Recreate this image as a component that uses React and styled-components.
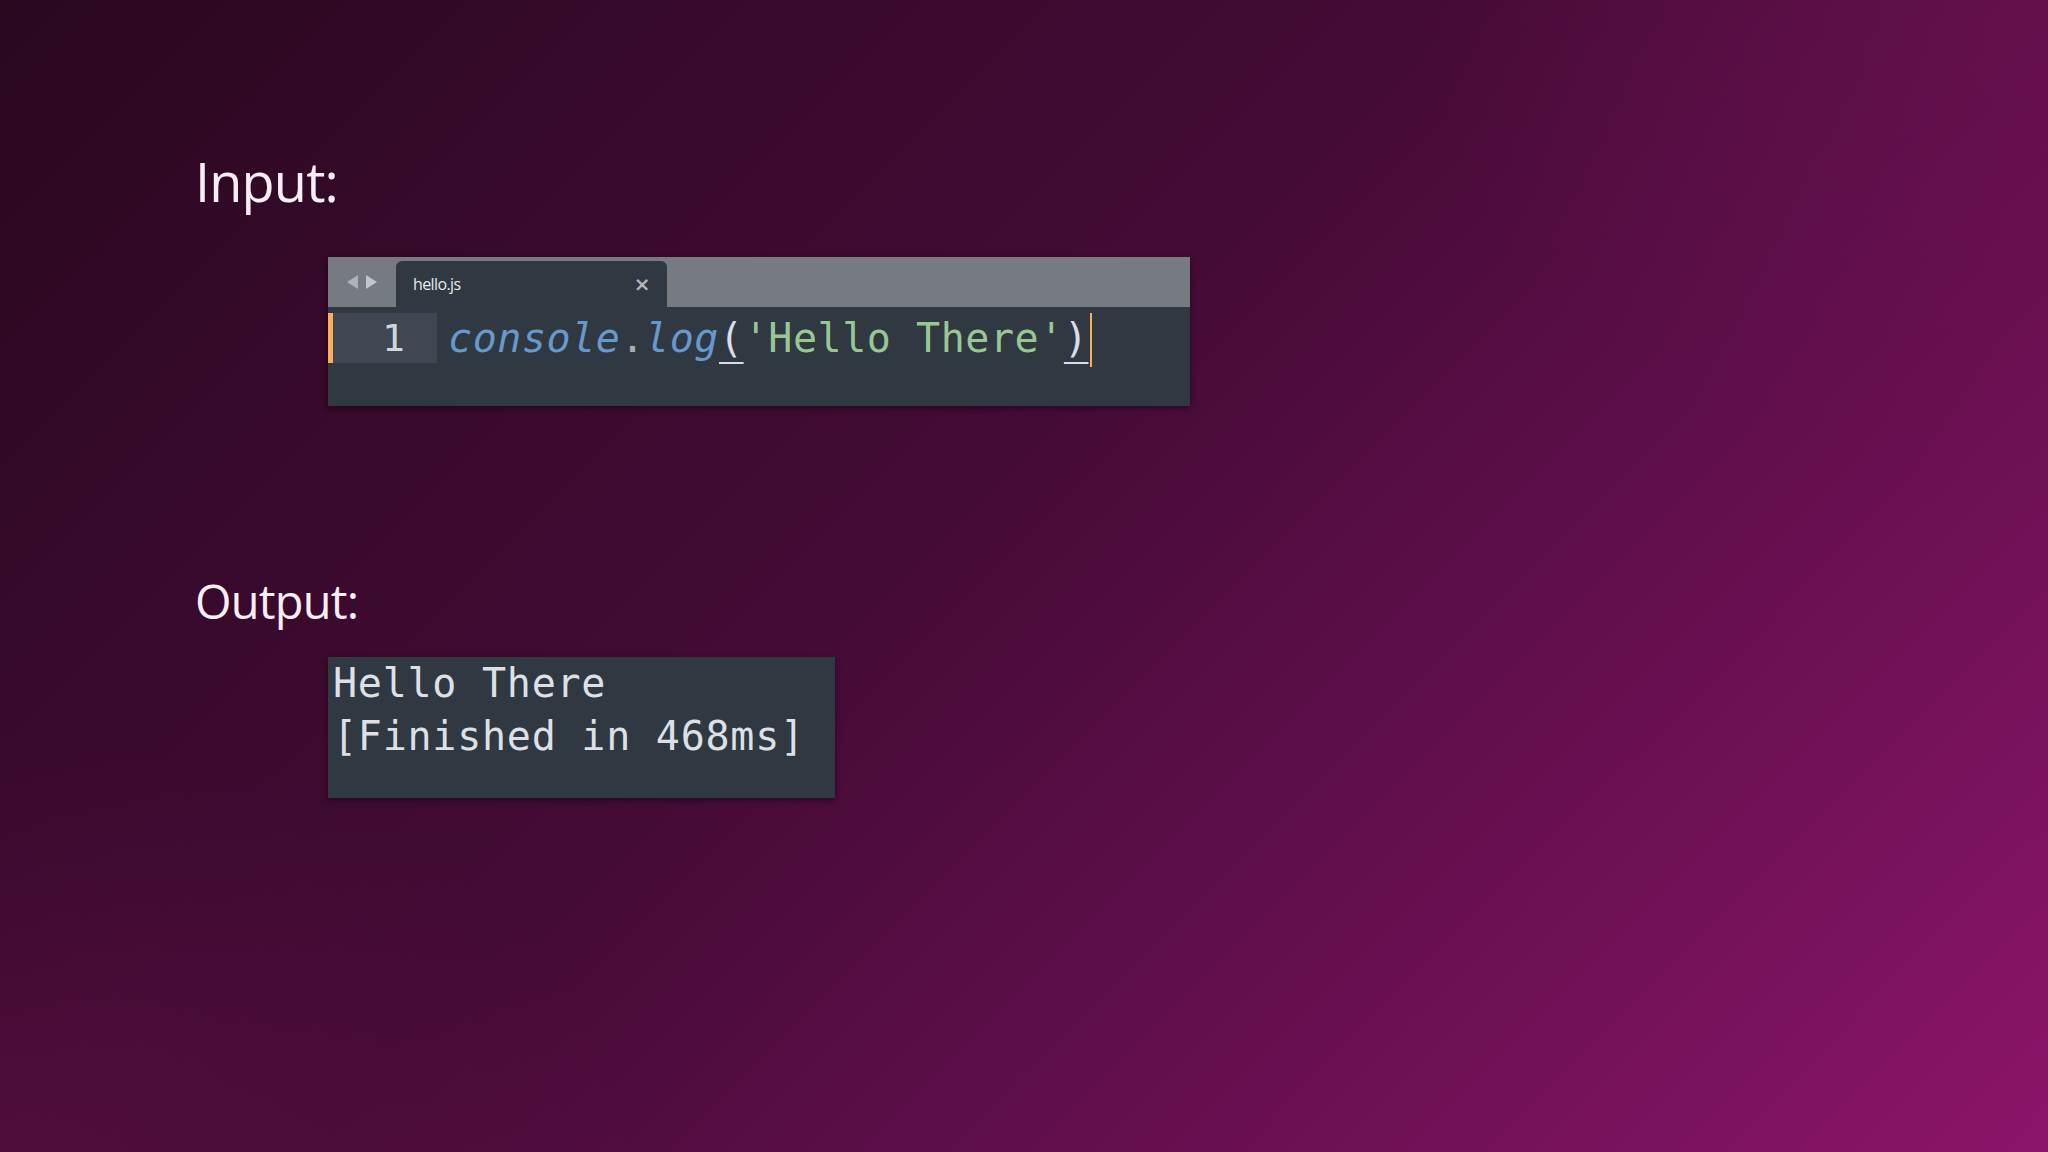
import React from "react";
import styled, { createGlobalStyle } from "styled-components";

const Global = createGlobalStyle`
  html, body { margin: 0; padding: 0; }
  body { width: 2048px; height: 1152px; overflow: hidden; }
`;

const Page = styled.div`
  width: 2048px;
  height: 1152px;
  box-sizing: border-box;
  padding: 153px 0 0 195px;
  background:
    radial-gradient(ellipse 900px 700px at 100% 0%, rgba(110, 18, 80, 0.45), transparent 70%),
    radial-gradient(ellipse 900px 600px at 0% 100%, rgba(110, 18, 80, 0.35), transparent 70%),
    linear-gradient(135deg, #2a0820 0%, #440b36 45%, #6a1052 75%, #8c1569 100%);
  display: flex;
  flex-direction: column;
  font-family: "Open Sans", "Noto Sans", sans-serif;
`;

const Heading = styled.h2`
  margin: 0 0 ${(p) => p.$gap}px 0;
  font-family: "Open Sans", "Noto Sans", sans-serif;
  font-weight: 400;
  font-size: ${(p) => p.$size}px;
  line-height: 56px;
  height: 56px;
  letter-spacing: -0.8px;
  color: #f6eef4;
`;

const Block = styled.div`
  margin-left: 133px;
  margin-bottom: ${(p) => p.$after || 0}px;
  background: #303841;
  box-shadow: 0 2px 6px rgba(0, 0, 0, 0.45);
  width: ${(p) => p.$w}px;
  height: ${(p) => p.$h}px;
  box-sizing: border-box;
`;

const TabBar = styled.div`
  height: 50px;
  background: #767b81;
  display: flex;
  align-items: flex-end;
`;

const Arrows = styled.div`
  width: 68px;
  height: 46px;
  display: flex;
  align-items: center;
  justify-content: center;
  gap: 8px;
  padding-bottom: 4px;
  box-sizing: border-box;
`;

const Tab = styled.div`
  width: 271px;
  height: 46px;
  background: #303841;
  border-radius: 6px 6px 0 0;
  display: flex;
  align-items: center;
  justify-content: space-between;
  padding: 0 17px;
  box-sizing: border-box;
  font-family: "Open Sans", "Noto Sans", sans-serif;
  font-size: 16px;
  letter-spacing: -0.6px;
  color: #e6e9ee;
`;

const Close = styled.span`
  color: #b0b6bc;
  font-size: 20px;
  font-weight: 700;
  font-family: "DejaVu Sans", sans-serif;
  margin-right: 0px;
`;

const CodeRow = styled.div`
  margin-top: 6px;
  height: 50px;
  display: flex;
  align-items: stretch;
`;

const Marker = styled.div`
  width: 5px;
  background: #f9ae58;
`;

const Gutter = styled.div`
  width: 104px;
  background: #3e4752;
  display: flex;
  align-items: center;
  justify-content: flex-end;
  padding-right: 32px;
  box-sizing: border-box;
  font-family: "DejaVu Sans Mono", monospace;
  font-size: 38px;
  color: #d2d6dc;
`;

const Code = styled.div`
  margin-left: 11px;
  display: flex;
  align-items: center;
  font-family: "DejaVu Sans Mono", monospace;
  font-size: 40px;
  letter-spacing: 0.55px;
  white-space: pre;
`;

const Tok = styled.span`
  color: ${(p) => p.$c};
  font-style: ${(p) => (p.$italic ? "italic" : "normal")};
  text-decoration: ${(p) => (p.$match ? "underline" : "none")};
  text-decoration-color: #d8dee9;
  text-decoration-thickness: 2px;
  text-underline-offset: 10px;
`;

const Caret = styled.span`
  display: inline-block;
  width: 2px;
  height: 54px;
  background: #f9ae58;
  margin-left: 2px;
  align-self: flex-start;
`;

const OutputText = styled.pre`
  margin: 0;
  padding: 0 0 0 5px;
  font-family: "DejaVu Sans Mono", monospace;
  font-size: 40px;
  letter-spacing: 0.75px;
  line-height: 53px;
  color: #dde1e7;
`;

const Arrow = ({ dir, op }) => (
  <svg width="11" height="14" viewBox="0 0 11 14">
    <polygon
      points={dir === "left" ? "11,0 11,14 0,7" : "0,0 0,14 11,7"}
      fill="#c2c6ca"
      opacity={op}
    />
  </svg>
);

export default function App() {
  return (
    <>
      <Global />
      <Page>
        <Heading $size={54} $gap={48}>Input:</Heading>
        <Block $w={862} $h={149} $after={167}>
          <TabBar>
            <Arrows>
              <Arrow dir="left" op={0.75} />
              <Arrow dir="right" op={1} />
            </Arrows>
            <Tab>
              <span>hello.js</span>
              <Close>×</Close>
            </Tab>
          </TabBar>
          <CodeRow>
            <Marker />
            <Gutter>1</Gutter>
            <Code>
              <Tok $c="#6699cc" $italic>console</Tok>
              <Tok $c="#a6acb9">.</Tok>
              <Tok $c="#6699cc" $italic>log</Tok>
              <Tok $c="#d8dee9" $match>(</Tok>
              <Tok $c="#99c794">'Hello There'</Tok>
              <Tok $c="#d8dee9" $match>)</Tok>
              <Caret />
            </Code>
          </CodeRow>
        </Block>
        <Heading $size={47} $gap={28}>Output:</Heading>
        <Block $w={507} $h={141}>
          <OutputText>{"Hello There\n[Finished in 468ms]"}</OutputText>
        </Block>
      </Page>
    </>
  );
}
